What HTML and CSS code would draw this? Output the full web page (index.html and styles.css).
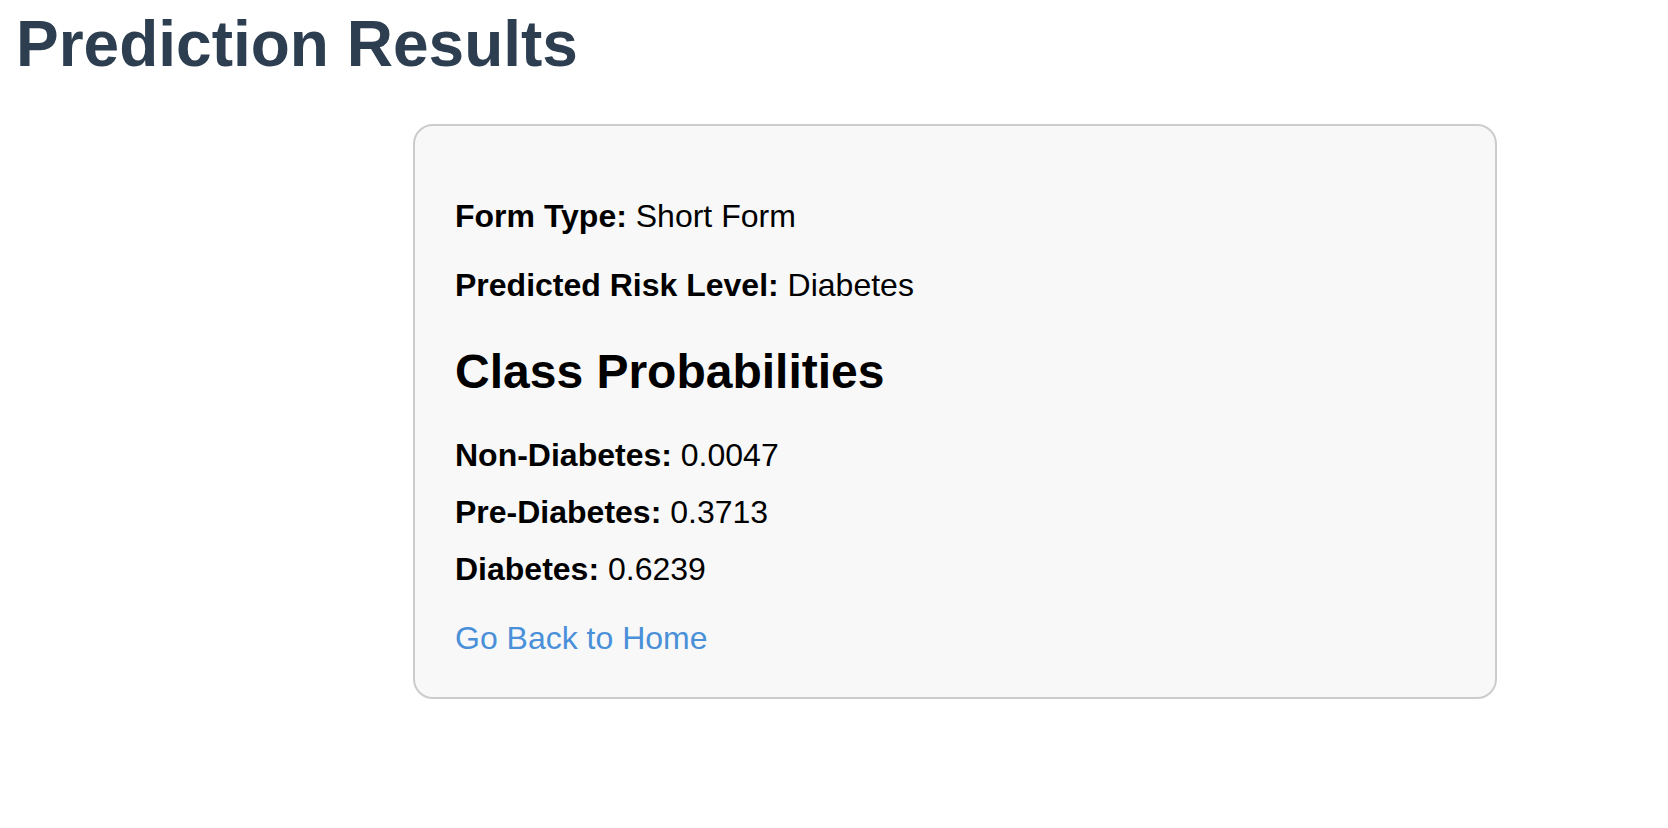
FILE: index.html
```html
<!DOCTYPE html>
<html lang="en">
<head>
<meta charset="utf-8">
<title>Prediction Results</title>
<link rel="stylesheet" href="styles.css">
</head>
<body>
  <h1 class="title">Prediction Results</h1>
  <div class="card">
    <p class="row"><strong>Form Type:</strong> Short Form</p>
    <p class="row"><strong>Predicted Risk Level:</strong> Diabetes</p>
    <h2 class="subtitle">Class Probabilities</h2>
    <div class="probs">
      <p class="prob"><strong>Non-Diabetes:</strong> 0.0047</p>
      <p class="prob"><strong>Pre-Diabetes:</strong> 0.3713</p>
      <p class="prob"><strong>Diabetes:</strong> 0.6239</p>
    </div>
    <div class="back"><a class="back-link" href="#">Go Back to Home</a></div>
  </div>
</body>
</html>
```

FILE: styles.css
```css
html, body {
  background: #ffffff;
}
body {
  margin: 0;
  padding: 7px 0 0 0;
  font-family: "Liberation Sans", Arial, Helvetica, sans-serif;
  font-size: 32px;
  color: #000000;
}
.title {
  margin: 0 0 43px 16px;
  font-size: 64px;
  font-weight: 700;
  line-height: normal;
  color: #2c3e50;
}
.card {
  box-sizing: border-box;
  width: 1084px;
  margin-left: 413px;
  padding: 40px;
  border: 2px solid #cccccc;
  border-radius: 20px;
  background: #f8f8f8;
}
.row {
  margin: 32px 0;
  line-height: normal;
}
.subtitle {
  margin: 40px 0 38px;
  font-size: 48px;
  font-weight: 700;
  line-height: normal;
}
.probs {
  margin: 0;
}
.prob {
  margin: 20px 0;
  line-height: normal;
}
.back {
  margin-top: 32px;
  line-height: normal;
}
.back-link {
  color: #4a90d9;
  text-decoration: none;
}
```
